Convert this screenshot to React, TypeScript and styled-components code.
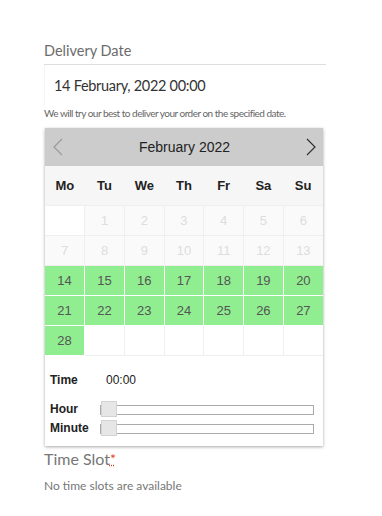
import styled, { createGlobalStyle } from 'styled-components'

const GlobalStyle = createGlobalStyle`
  body {
    margin: 0;
    background: #fff;
    font-family: Lato, "Open Sans", sans-serif;
  }
`

const Page = styled.div`
  width: 282px;
  padding: 39px 56px 0 44px;
`

const FieldLabel = styled.div`
  font-size: 14.5px;
  line-height: 24px;
  color: #6b6b6b;
  padding-bottom: 1px;
  border-bottom: 1px solid #dedede;
`

const DateInput = styled.div`
  height: 40px;
  display: flex;
  align-items: center;
  padding-left: 9px;
  border-left: 1px solid #f4f4f4;
  font-size: 14.5px;
  letter-spacing: -0.3px;
  color: #333;
`

const Help = styled.p`
  margin: 2px 0 8px;
  font-size: 10px;
  line-height: 13px;
  letter-spacing: -0.5px;
  white-space: nowrap;
  color: #666;
`

const Picker = styled.div`
  width: 278px;
  margin-left: 1px;
  background: #fff;
  box-shadow: 0 1px 3px rgba(0, 0, 0, 0.35);
  font-family: "Liberation Sans", Arial, sans-serif;
`

const Header = styled.div`
  height: 38px;
  background: #cccccc;
  display: flex;
  align-items: center;
  justify-content: space-between;
  padding: 0 6px 0 7px;
`

const Title = styled.span`
  font-size: 14px;
  color: #222;
`

const NavButton = styled.span<{ $disabled?: boolean }>`
  display: inline-flex;
  color: ${(p) => (p.$disabled ? '#9a9a9a' : '#333')};
`

const Grid = styled.table`
  width: 100%;
  border-collapse: collapse;
  table-layout: fixed;
`

const DayName = styled.th`
  height: 39px;
  background: #f6f6f6;
  font-size: 13px;
  font-weight: bold;
  color: #222;
  padding: 0;
`

type Kind = 'empty' | 'past' | 'open'

const Cell = styled.td<{ $kind: Kind }>`
  height: 29px;
  padding: 0;
  text-align: center;
  font-size: 13px;
  border: 1px solid ${(p) => (p.$kind === 'open' ? '#fff' : '#efefef')};
  background: ${(p) =>
    p.$kind === 'open' ? '#90ee90' : p.$kind === 'past' ? '#fafafa' : '#fff'};
  color: ${(p) => (p.$kind === 'open' ? '#555' : '#ddd')};
  &:first-child {
    border-left: none;
  }
  &:last-child {
    border-right: none;
  }
`

const TimePanel = styled.div`
  padding: 15px 9px 8px 5px;
  display: grid;
  grid-template-columns: 50px 1fr;
  align-items: center;
  font-size: 12px;
  color: #222;
`

const TimeLabel = styled.span<{ $top?: number }>`
  font-weight: bold;
  line-height: 19px;
  margin-top: ${(p) => p.$top ?? 0}px;
`

const TimeValue = styled.span<{ $top?: number }>`
  padding-left: 6px;
  line-height: 19px;
  margin-top: ${(p) => p.$top ?? 0}px;
`

const Track = styled.div<{ $top?: number }>`
  position: relative;
  height: 8px;
  border: 1px solid #aaa;
  background: #fff;
  margin-top: ${(p) => p.$top ?? 0}px;
`

const Thumb = styled.span`
  position: absolute;
  left: 0;
  top: -5px;
  width: 14px;
  height: 14px;
  background: #e6e6e6;
  border: 1px solid #d3d3d3;
`

const SlotLabel = styled.div`
  margin-top: 3px;
  font-size: 16px;
  line-height: 20px;
  color: #777;
`

const Required = styled.abbr`
  color: #e2401c;
  font-size: 14px;
  text-decoration: underline dotted;
  vertical-align: top;
`

const SlotNote = styled.p`
  margin: 9px 0 0;
  font-size: 12px;
  color: #777;
`

const Chevron = ({ dir }: { dir: 'left' | 'right' }) => (
  <svg width="12" height="18" viewBox="0 0 12 18" fill="none">
    <path
      d={dir === 'left' ? 'M10 1 L2 9 L10 17' : 'M2 1 L10 9 L2 17'}
      stroke="currentColor"
      strokeWidth="1.2"
    />
  </svg>
)

const days = ['Mo', 'Tu', 'We', 'Th', 'Fr', 'Sa', 'Su']

const cells: (number | null)[] = [null, ...Array.from({ length: 28 }, (_, i) => i + 1)]
while (cells.length < 35) cells.push(null)
const weeks = Array.from({ length: 5 }, (_, w) => cells.slice(w * 7, w * 7 + 7))

const kindOf = (d: number | null): Kind => (d === null ? 'empty' : d < 14 ? 'past' : 'open')

const App = () => {
  return (
    <Page>
      <GlobalStyle />
      <FieldLabel>Delivery Date</FieldLabel>
      <DateInput>14 February, 2022 00:00</DateInput>
      <Help>We will try our best to deliver your order on the specified date.</Help>
      <Picker>
        <Header>
          <NavButton $disabled>
            <Chevron dir="left" />
          </NavButton>
          <Title>February 2022</Title>
          <NavButton>
            <Chevron dir="right" />
          </NavButton>
        </Header>
        <Grid>
          <thead>
            <tr>
              {days.map((d) => (
                <DayName key={d}>{d}</DayName>
              ))}
            </tr>
          </thead>
          <tbody>
            {weeks.map((week, i) => (
              <tr key={i}>
                {week.map((d, j) => (
                  <Cell key={j} $kind={kindOf(d)}>
                    {d ?? ''}
                  </Cell>
                ))}
              </tr>
            ))}
          </tbody>
        </Grid>
        <TimePanel>
          <TimeLabel>Time</TimeLabel>
          <TimeValue>00:00</TimeValue>
          <TimeLabel $top={10}>Hour</TimeLabel>
          <Track $top={10}>
            <Thumb />
          </Track>
          <TimeLabel>Minute</TimeLabel>
          <Track>
            <Thumb />
          </Track>
        </TimePanel>
      </Picker>
      <SlotLabel>
        Time Slot<Required title="required">*</Required>
      </SlotLabel>
      <SlotNote>No time slots are available</SlotNote>
    </Page>
  )
}

export default App
